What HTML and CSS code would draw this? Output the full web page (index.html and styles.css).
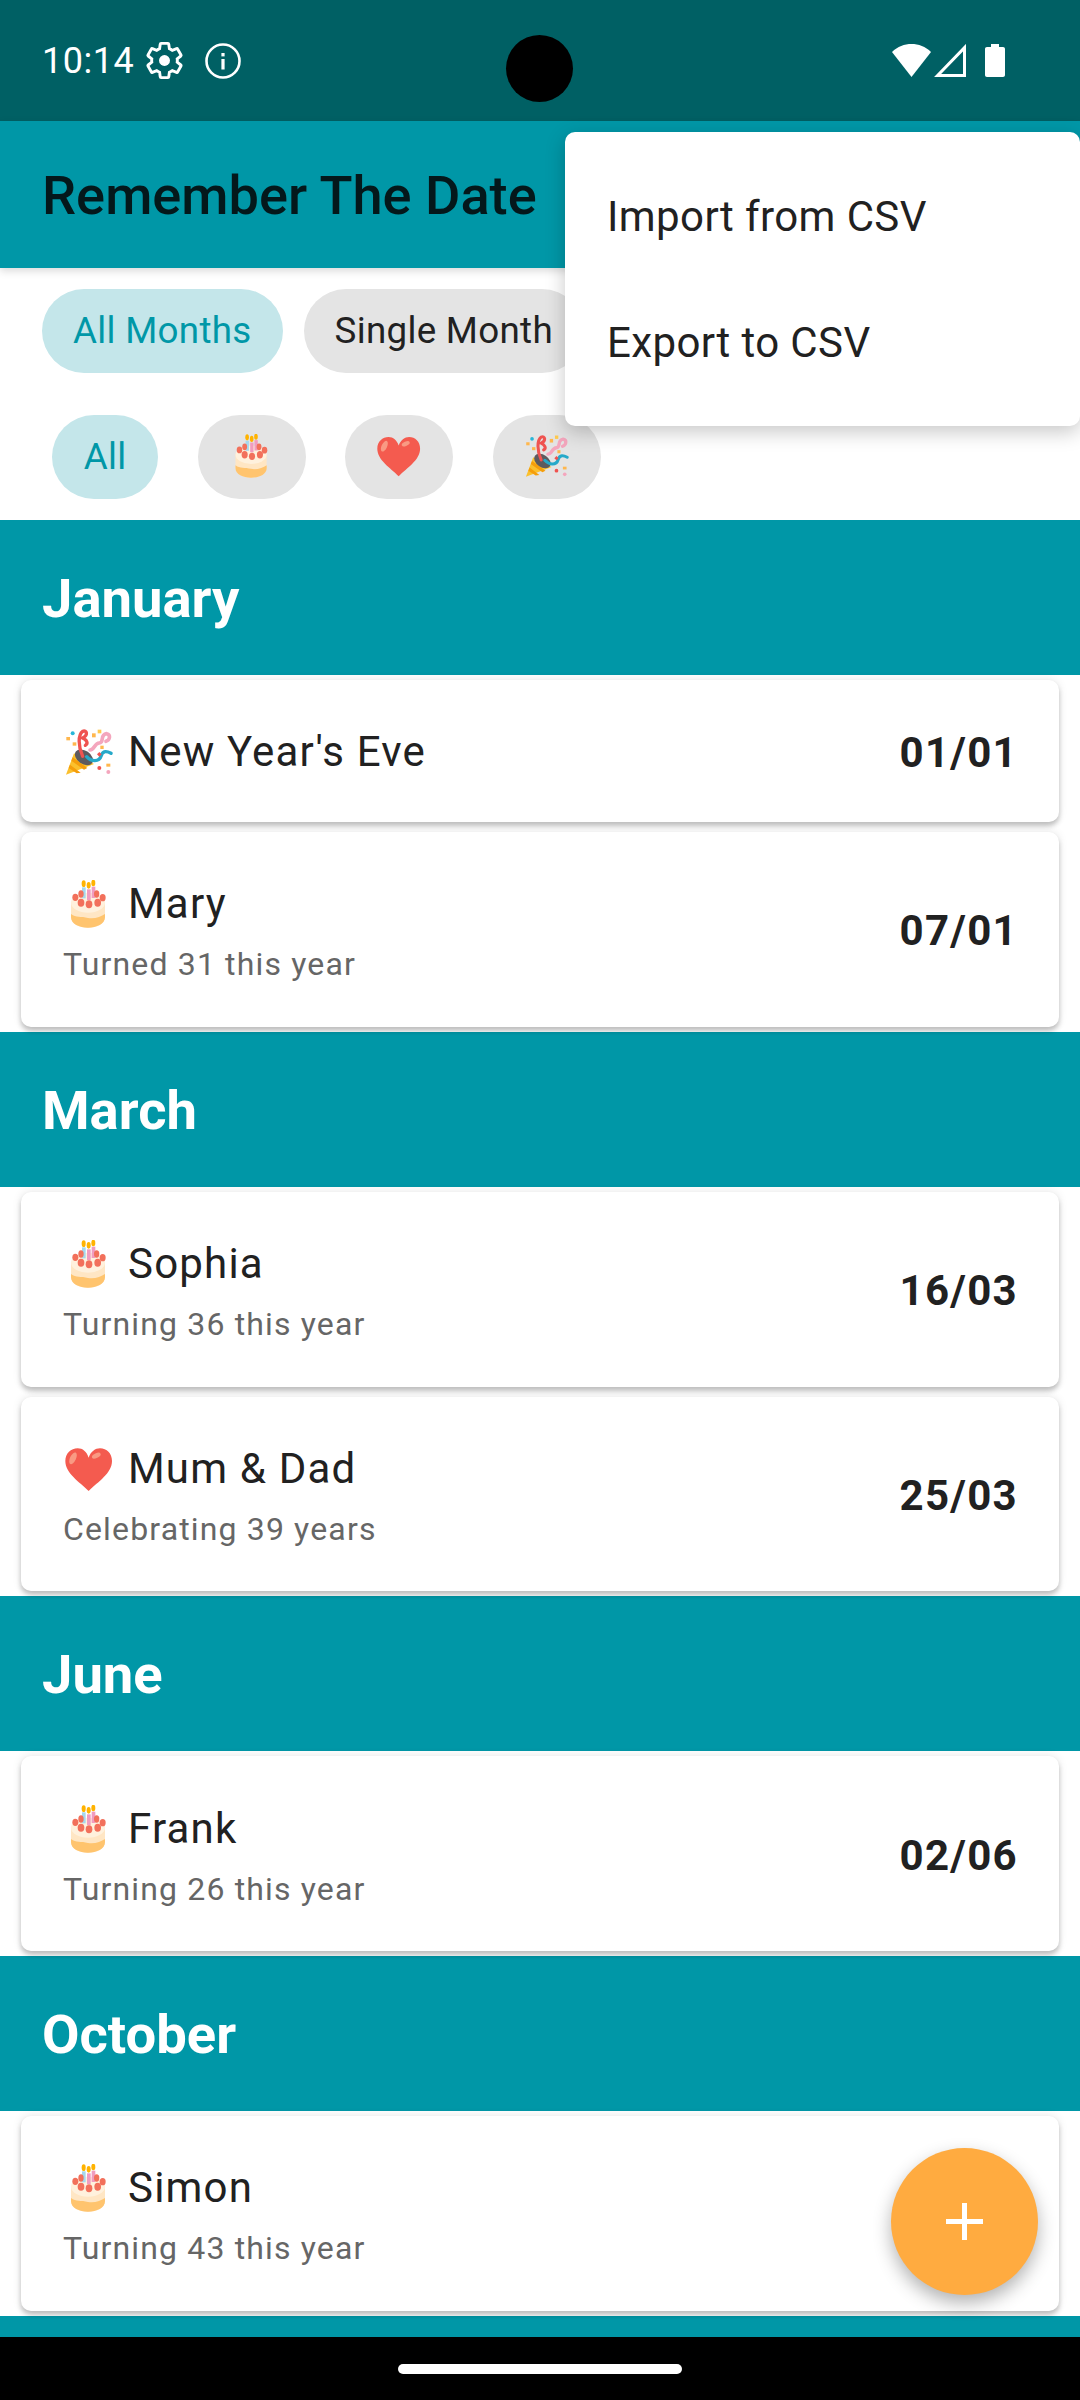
FILE: index.html
```html
<!DOCTYPE html>
<html lang="en">
<head>
    <meta charset="UTF-8" />
    <meta name="viewport" content="width=device-width, initial-scale=1.0"/>

    <title>Remember The Date</title>

    <link rel="stylesheet" href="styles.css">
</head>
<body>

<svg class="sprites" aria-hidden="true">
    <symbol id="party" viewBox="47 40 144 144">
        <path d="M50 180 L74 116 L134 148 Z" fill="#fbc02d"/>
        <path d="M62 150 L94 174 L82 176 L58 160 Z M70 128 L114 160 L104 165 L66 138 Z" fill="#f59e0b"/>
        <ellipse cx="104" cy="128" rx="30" ry="20" transform="rotate(35 104 128)" fill="#5d5a5e"/>
        <path d="M100 125 C86 95 86 60 100 50 C113 45 117 62 100 70 C112 76 118 86 108 92" fill="none" stroke="#ef5350" stroke-width="10" stroke-linecap="round"/>
        <path d="M122 106 C136 106 134 86 150 85 C166 84 150 60 172 57 C185 60 182 76 170 80" fill="none" stroke="#f4a6bd" stroke-width="11" stroke-linecap="round"/>
        <path d="M112 126 C126 142 150 142 155 125 C160 106 174 110 185 116" fill="none" stroke="#26a9c9" stroke-width="10" stroke-linecap="round"/>
        <circle cx="70" cy="56" r="6" fill="#29b6d8"/>
        <rect x="51" y="67" width="11" height="10" fill="#ffb74d"/>
        <rect x="70" y="83" width="11" height="10" fill="#ffb74d"/>
        <rect x="128" y="56" width="11" height="12" fill="#ffb74d"/>
        <rect x="145" y="45" width="11" height="11" fill="#ffca4f"/>
        <rect x="153" y="93" width="10" height="10" fill="#ffb74d"/>
        <path d="M150 112 L157 119 L150 126 L143 119 Z" fill="#ef5350"/>
        <circle cx="150" cy="160" r="6" fill="#ef5350"/>
        <rect x="171" y="147" width="12" height="9" fill="#ffb74d"/>
        <circle cx="177" cy="172" r="6" fill="#f4a6bd"/>
    </symbol>
    <symbol id="cake" viewBox="47 40 144 144">
        <path d="M65 105 L65 150 C65 172 90 183 116 183 C142 183 167 172 167 150 L167 105 Z" fill="#ffe6c4"/>
        <path d="M65 142 C80 154 95 148 116 154 C135 158 155 150 167 142 L167 152 C167 172 142 183 116 183 C90 183 65 172 65 152 Z" fill="#ffc46e"/>
        <ellipse cx="116" cy="108" rx="51" ry="30" fill="#fff1dd"/>
        <rect x="98" y="62" width="11" height="33" fill="#a5d8ee"/>
        <rect x="113" y="68" width="11" height="32" fill="#f19cbf"/>
        <rect x="127" y="60" width="11" height="34" fill="#f19cbf"/>
        <ellipse cx="103" cy="51" rx="6" ry="10" fill="#ffb300"/>
        <ellipse cx="118" cy="56" rx="6" ry="10" fill="#ffb300"/>
        <ellipse cx="132" cy="49" rx="6" ry="10" fill="#ffb300"/>
        <g fill="#f2705b">
            <ellipse cx="78" cy="92" rx="9" ry="11"/>
            <ellipse cx="95" cy="82" rx="8" ry="11"/>
            <ellipse cx="142" cy="82" rx="8" ry="11"/>
            <ellipse cx="160" cy="93" rx="9" ry="11"/>
            <ellipse cx="95" cy="108" rx="10" ry="12"/>
            <ellipse cx="119" cy="113" rx="10" ry="12"/>
            <ellipse cx="145" cy="108" rx="10" ry="12"/>
        </g>
    </symbol>
    <symbol id="heart" viewBox="47 40 144 144">
        <path d="M118 178 C90 150 48 125 48 88 C48 65 65 50 85 50 C100 50 112 60 118 78 C124 60 138 50 152 50 C172 50 188 65 188 88 C188 125 146 150 118 178 Z" fill="#f45b4f"/>
        <ellipse cx="71" cy="80" rx="9" ry="19" transform="rotate(25 71 80)" fill="#f99a83"/>
        <ellipse cx="141" cy="72" rx="14" ry="7" transform="rotate(-25 141 72)" fill="#f99a83"/>
    </symbol>
</svg>

<header class="status-bar">
    <div class="status-left">
        <span class="status-time">10:14</span>
        <svg class="status-gear" viewBox="0 0 24 24">
            <path d="M19.43 12.98c.04-.32.07-.64.07-.98 0-.34-.03-.66-.07-.98l2.11-1.65c.19-.15.24-.42.12-.64l-2-3.46c-.12-.22-.39-.3-.61-.22l-2.49 1c-.52-.4-1.08-.73-1.69-.98l-.38-2.65C14.46 2.18 14.25 2 14 2h-4c-.25 0-.46.18-.49.42l-.38 2.65c-.61.25-1.17.59-1.69.98l-2.49-1c-.23-.09-.49 0-.61.22l-2 3.46c-.13.22-.07.49.12.64l2.11 1.65c-.04.32-.07.65-.07.98 0 .33.03.66.07.98l-2.11 1.65c-.19.15-.24.42-.12.64l2 3.46c.12.22.39.3.61.22l2.49-1c.52.4 1.08.73 1.69.98l.38 2.65c.03.24.24.42.49.42h4c.25 0 .46-.18.49-.42l.38-2.65c.61-.25 1.17-.59 1.69-.98l2.49 1c.23.09.49 0 .61-.22l2-3.46c.12-.22.07-.49-.12-.64l-2.11-1.65z" fill="none" stroke="#fff" stroke-width="1.7"/>
            <circle cx="12" cy="12" r="3.2" fill="#fff"/>
        </svg>
        <svg class="status-info" viewBox="0 0 36 36">
            <circle cx="18" cy="18" r="16.5" fill="none" stroke="#fff" stroke-width="2.6"/>
            <rect x="16.4" y="16" width="3.2" height="10.5" fill="#fff"/>
            <rect x="16.4" y="10" width="3.2" height="3.4" fill="#fff"/>
        </svg>
    </div>
    <div class="status-right">
        <svg class="status-wifi" viewBox="0 0 39 33">
            <path d="M0 8 C11 -2.6 28 -2.6 39 8 L19.5 33 Z" fill="#fff"/>
        </svg>
        <svg class="status-signal" viewBox="0 0 32 33">
            <path d="M30.5 3.6 V31.5 H3.6 Z" fill="none" stroke="#fff" stroke-width="3"/>
        </svg>
        <svg class="status-battery" viewBox="0 0 20 33">
            <path d="M6 0 H14 V3 H18 C19.2 3 20 3.8 20 5 V31 C20 32.2 19.2 33 18 33 H2 C.8 33 0 32.2 0 31 V5 C0 3.8 .8 3 2 3 H6 Z" fill="#fff"/>
        </svg>
    </div>
</header>
<div class="camera"></div>

<div class="app-bar">
    <h1>Remember The Date</h1>
</div>

<div class="filters">
    <div class="chip-row">
        <span class="chip active">All Months</span>
        <span class="chip">Single Month</span>
    </div>
    <div class="chip-row types">
        <span class="chip round first active">All</span>
        <span class="chip round"><svg class="emoji small"><use href="#cake"/></svg></span>
        <span class="chip round"><svg class="emoji small"><use href="#heart"/></svg></span>
        <span class="chip round"><svg class="emoji small"><use href="#party"/></svg></span>
    </div>
</div>

<main class="list">
    <h2 class="month">January</h2>
    <div class="card short">
        <div class="card-text">
            <div class="card-title"><svg class="emoji"><use href="#party"/></svg>New Year's Eve</div>
        </div>
        <div class="card-date">01/01</div>
    </div>
    <div class="card">
        <div class="card-text">
            <div class="card-title"><svg class="emoji"><use href="#cake"/></svg>Mary</div>
            <div class="card-sub">Turned 31 this year</div>
        </div>
        <div class="card-date">07/01</div>
    </div>

    <h2 class="month">March</h2>
    <div class="card">
        <div class="card-text">
            <div class="card-title"><svg class="emoji"><use href="#cake"/></svg>Sophia</div>
            <div class="card-sub">Turning 36 this year</div>
        </div>
        <div class="card-date">16/03</div>
    </div>
    <div class="card">
        <div class="card-text">
            <div class="card-title"><svg class="emoji"><use href="#heart"/></svg>Mum &amp; Dad</div>
            <div class="card-sub">Celebrating 39 years</div>
        </div>
        <div class="card-date">25/03</div>
    </div>

    <h2 class="month">June</h2>
    <div class="card">
        <div class="card-text">
            <div class="card-title"><svg class="emoji"><use href="#cake"/></svg>Frank</div>
            <div class="card-sub">Turning 26 this year</div>
        </div>
        <div class="card-date">02/06</div>
    </div>

    <h2 class="month">October</h2>
    <div class="card">
        <div class="card-text">
            <div class="card-title"><svg class="emoji"><use href="#cake"/></svg>Simon</div>
            <div class="card-sub">Turning 43 this year</div>
        </div>
        <div class="card-date">12/10</div>
    </div>

    <h2 class="month"></h2>
</main>

<nav class="nav-bar">
    <div class="home-pill"></div>
</nav>

<div class="menu">
    <div class="menu-item">Import from CSV</div>
    <div class="menu-item">Export to CSV</div>
</div>

<button class="fab" aria-label="Add">
    <svg viewBox="0 0 37 37"><path d="M16 0 H21 V16 H37 V21 H21 V37 H16 V21 H0 V16 H16 Z" fill="#fff"/></svg>
</button>

</body>
</html>
```

FILE: styles.css
```css
html, body {
    height: 100%;
}

body {
    margin: 0;
    width: 1080px;
    height: 2400px;
    position: relative;
    overflow: hidden;
    display: flex;
    flex-direction: column;
    font-family: Roboto, "Noto Sans", sans-serif;
    background: #fff;
    color: #212121;
}

.sprites {
    display: none;
}

/* Status bar */
.status-bar {
    flex: none;
    height: 121px;
    box-sizing: border-box;
    padding: 0 75px 0 42px;
    display: flex;
    align-items: center;
    justify-content: space-between;
    background: #006064;
    color: #fff;
}

.status-left, .status-right {
    display: flex;
    align-items: center;
}

.status-time {
    font-size: 36px;
    line-height: 42px;
    letter-spacing: 0.5px;
}

.status-gear {
    width: 41px;
    height: 41px;
    margin-left: 10px;
}

.status-info {
    width: 36px;
    height: 36px;
    margin-left: 20px;
}

.status-wifi {
    width: 39px;
    height: 33px;
}

.status-signal {
    width: 32px;
    height: 33px;
    margin-left: 3px;
}

.status-battery {
    width: 20px;
    height: 33px;
    margin-left: 19px;
}

.camera {
    position: absolute;
    top: 35px;
    left: 506px;
    width: 67px;
    height: 67px;
    border-radius: 50%;
    background: #000;
}

/* App bar */
.app-bar {
    flex: none;
    height: 147px;
    box-sizing: border-box;
    padding: 2px 42px 0;
    display: flex;
    align-items: center;
    background: #0097a7;
    box-shadow: 0 3px 8px rgba(0,0,0,0.15);
    position: relative;
}

.app-bar h1 {
    margin: 0;
    font-size: 54.2px;
    font-weight: 500;
    color: #04181b;
}

/* Filter chips */
.filters {
    flex: none;
    height: 252px;
    box-sizing: border-box;
    padding: 21px 42px;
    display: flex;
    flex-direction: column;
    gap: 42px;
}

.chip-row {
    display: flex;
    gap: 21px;
}

.chip-row.types {
    padding-left: 10px;
    gap: 39.5px;
}

.chip {
    height: 84px;
    box-sizing: border-box;
    padding: 0 31px 2px;
    border-radius: 42px;
    display: flex;
    align-items: center;
    justify-content: center;
    font-size: 36.75px;
    letter-spacing: 0.3px;
    background: #e4e4e4;
    color: #212121;
    white-space: nowrap;
}

.chip.active {
    background: #c4e6ea;
    color: #0097a7;
}

.chip.round {
    width: 108px;
    padding: 0 0 2px;
}

.chip.round.first {
    width: 106px;
}

/* List */
.list {
    flex: 1;
    min-height: 0;
    overflow: hidden;
    display: flex;
    flex-direction: column;
}

.month {
    flex: none;
    margin: 0;
    height: 155px;
    box-sizing: border-box;
    padding: 2px 42px 0;
    display: flex;
    align-items: center;
    font-size: 54.4px;
    font-weight: 700;
    color: #fff;
    background: #0097a7;
}

.card {
    flex: none;
    height: 194.75px;
    box-sizing: border-box;
    margin: 5px 21px;
    padding: 3px 41px 0 42px;
    display: flex;
    align-items: center;
    justify-content: space-between;
    background: #fff;
    border-radius: 10px;
    box-shadow: 0 4px 5px rgba(0,0,0,0.22), 0 0 10px rgba(0,0,0,0.1);
    position: relative;
}

.card.short {
    height: 142px;
    padding-top: 2px;
}

.card-title {
    display: flex;
    align-items: center;
    gap: 15px;
    font-size: 42px;
    line-height: 56px;
    letter-spacing: 1.2px;
    color: #212121;
}

.card-sub {
    margin-top: 11px;
    font-size: 32px;
    line-height: 42px;
    letter-spacing: 1.15px;
    color: #666;
}

.card-date {
    font-size: 42px;
    font-weight: 700;
    letter-spacing: 1.3px;
    color: #212121;
}

.emoji {
    width: 48px;
    height: 48px;
    margin-left: 2px;
    flex: none;
}

.emoji.small {
    width: 44px;
    height: 44px;
    margin: 0;
}

/* Bottom nav */
.nav-bar {
    flex: none;
    height: 63px;
    display: flex;
    align-items: center;
    justify-content: center;
    background: #000;
}

.home-pill {
    width: 284px;
    height: 10px;
    border-radius: 5px;
    background: #fff;
}

/* Overflow menu */
.menu {
    position: absolute;
    top: 132px;
    right: 0;
    width: 515px;
    box-sizing: border-box;
    padding: 21px 0;
    background: #fff;
    border-radius: 10px;
    box-shadow: 0 6px 20px rgba(0,0,0,0.22);
}

.menu-item {
    height: 126px;
    padding: 0 42px;
    display: flex;
    align-items: center;
    font-size: 42px;
    letter-spacing: 0.4px;
    color: #212121;
}

/* Add button */
.fab {
    position: absolute;
    right: 42px;
    bottom: 105px;
    width: 147px;
    height: 147px;
    padding: 0;
    border: none;
    border-radius: 50%;
    display: flex;
    align-items: center;
    justify-content: center;
    background: #ffab40;
    box-shadow: 0 8px 18px rgba(0,0,0,0.3);
}

.fab svg {
    width: 37px;
    height: 37px;
}
```
